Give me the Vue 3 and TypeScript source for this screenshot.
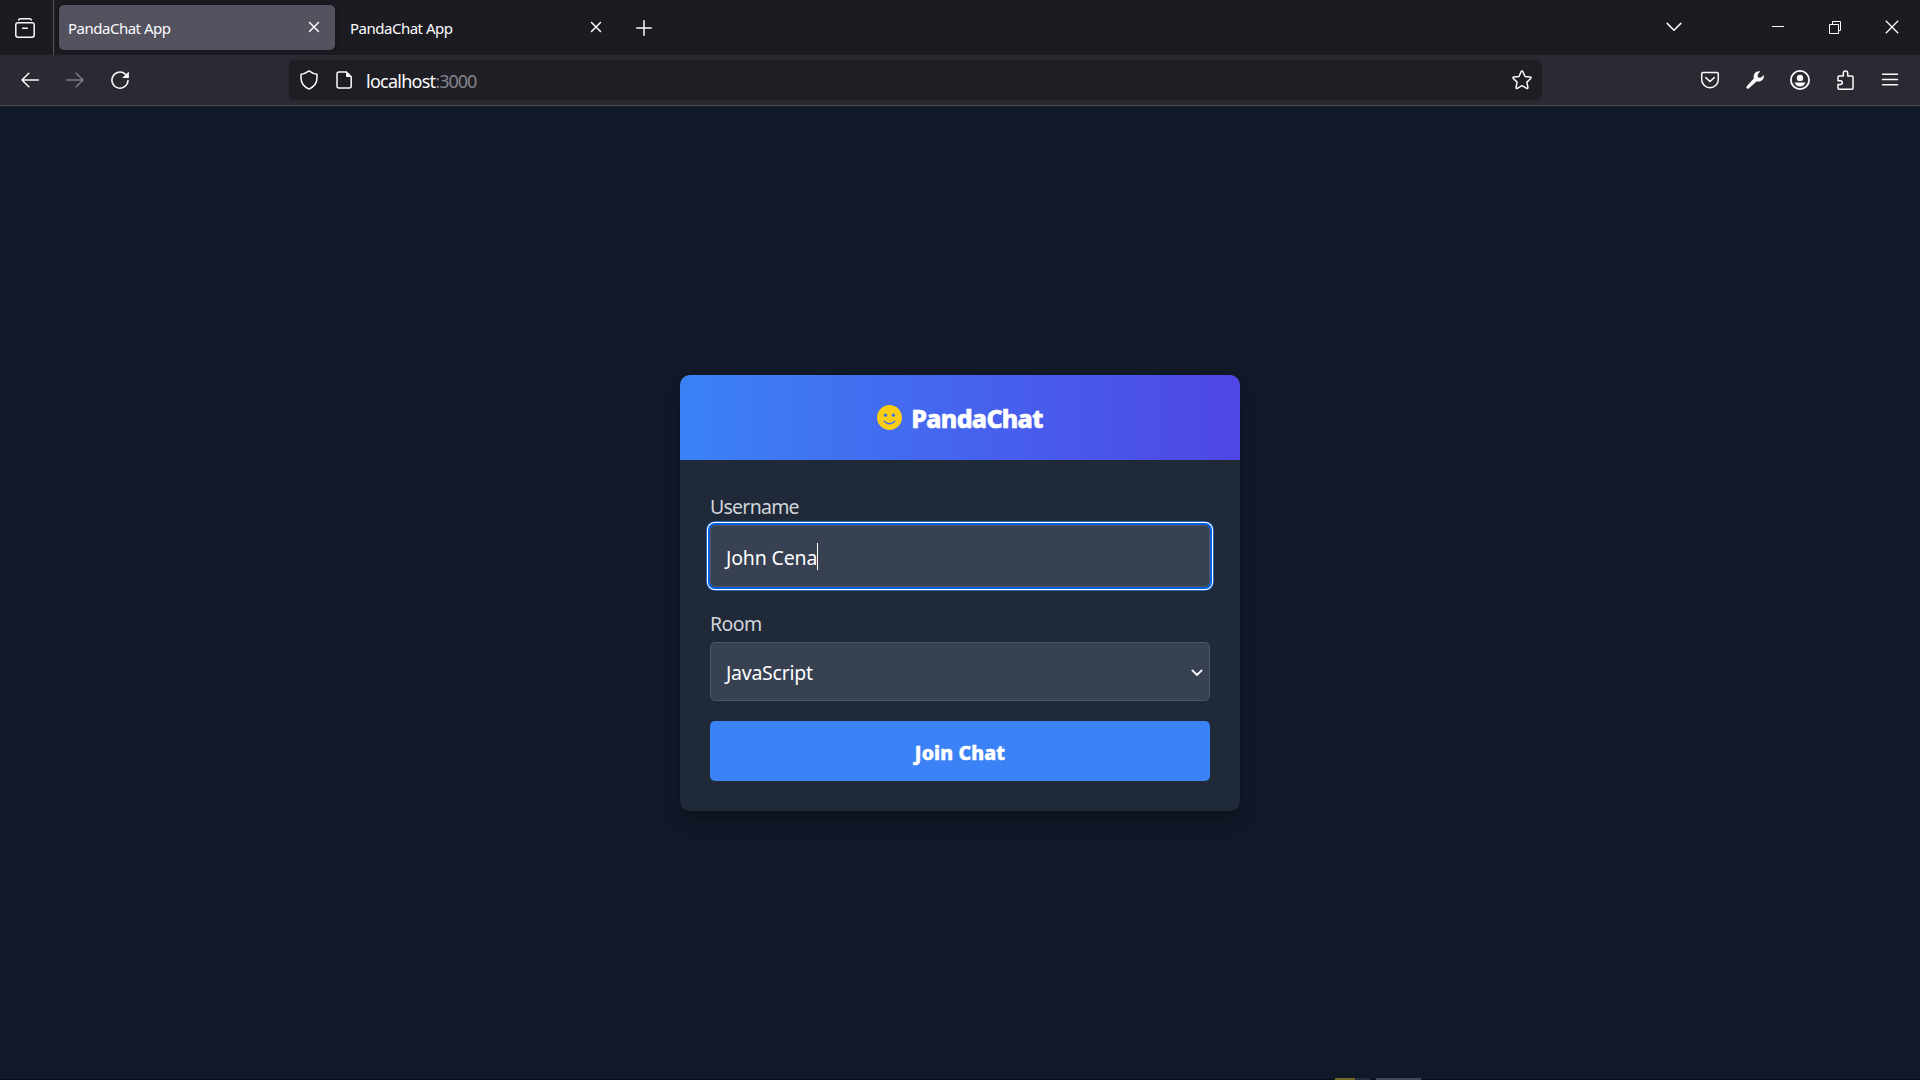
<script setup lang="ts">
import { ref } from 'vue'

interface Tab {
  title: string
  active: boolean
}

const tabs: Tab[] = [
  { title: 'PandaChat App', active: true },
  { title: 'PandaChat App', active: false },
]
const username = ref('John Cena')
const room = ref('JavaScript')
</script>

<template>
  <div class="window">
    <header class="tabbar">
      <div class="view-button">
        <svg class="icon" viewBox="0 0 20 20">
          <path d="M3.6 1.9Q4 .8 5.400 .8h9.200q1.400 0 1.800 1.100" />
          <rect x=".8" y="4.800" width="18.400" height="14.400" rx="2.200" />
          <path d="M7.700 10.200h4.600" />
        </svg>
      </div>
      <div class="tabs">
        <div v-for="(tab, i) in tabs" :key="i" class="tab" :class="{ active: tab.active }">
          <span class="tab-title">{{ tab.title }}</span>
          <svg class="tab-close" viewBox="0 0 12 12"><path d="M1.500 1.500l9 9M10.500 1.500l-9 9" /></svg>
        </div>
        <svg class="plus" viewBox="0 0 16 16"><path d="M8 .8v14.400M.8 8h14.400" /></svg>
      </div>
      <div class="window-controls">
        <svg class="chevron" viewBox="0 0 16 10"><path d="M1.200 1.400L8 8.200l6.800-6.800" /></svg>
        <svg class="win min" viewBox="0 0 14 14"><path d="M1 6.500h12" /></svg>
        <svg class="win restore" viewBox="0 0 14 14"><path d="M1.500 4.500h9v9h-9zM4.500 4.500v-3h8v9h-2" /></svg>
        <svg class="win close" viewBox="0 0 14 14"><path d="M.8 .8l12.400 12.400M13.200 .8L.8 13.200" /></svg>
      </div>
    </header>

    <nav class="toolbar">
      <div class="nav-left">
        <svg class="icon" viewBox="0 0 20 20"><path d="M18.400 10H2M8.800 3.200L2 10l6.800 6.800" /></svg>
        <svg class="icon disabled" viewBox="0 0 20 20"><path d="M1.600 10H18M11.200 3.200L18 10l-6.800 6.800" /></svg>
        <svg class="icon" viewBox="0 0 20 20">
          <path d="M15.300 4.100A8.050 8.050 0 1 0 18 10.500" />
          <path class="solid" d="M18.900 1.400v6.200q0 .5-.5 .5h-6.200z" />
        </svg>
      </div>
      <div class="urlbar">
        <svg class="icon" viewBox="0 0 20 20">
          <path d="M10 .9q4 3 8 3.400v3.500c0 6-3.500 9.300-8 11.300c-4.500-2-8-5.300-8-11.300V4.300Q6 3.900 10 .9z" />
        </svg>
        <svg class="icon page" viewBox="0 0 20 20">
          <path d="M5 1.900h7.200l5 5v9.200q0 2-2 2H5q-2 0-2-2V3.900q0-2 2-2z" />
          <path class="solid" d="M12 1.500l5.500 5.500H13q-1 0-1-1z" />
        </svg>
        <span class="url">localhost<span class="port">:3000</span></span>
        <svg class="icon star" viewBox="0 0 20 20">
          <path d="M10 1.100q.6 0 .9.700l2.100 4.700 5.200.6q1.400.3.500 1.400l-3.800 3.600 1 5.200q.1 1.500-1.200 1L10 15.700l-4.700 2.600q-1.300.5-1.200-1l1-5.200L1.300 8.500Q.4 7.400 1.800 7.100L7 6.500l2.100-4.700q.3-.7.900-.7z" />
        </svg>
      </div>
      <div class="nav-right">
        <svg class="icon" viewBox="0 0 20 20">
          <path d="M3.200 2.600h13.600q1.500 0 1.500 1.500V9.400a8.300 8.300 0 0 1-16.600 0V4.100q0-1.500 1.500-1.500z" />
          <path d="M5.800 7.600L10 11.500l4.200-3.900" />
        </svg>
        <svg class="icon" viewBox="0 0 20 20">
          <path class="solid" d="M15.300 1.300l-2.700 3.400.4 2.700 2.600.4 3.200-2.900c.7 4.500-3 7.400-6.900 6.300l-8.300 7.300c-1.400 1-3-.6-2-2l7.300-8.200C7.800 4 10.900.5 15.300 1.300z" />
        </svg>
        <svg class="icon" viewBox="0 0 20 20">
          <circle class="heavy" cx="10" cy="10" r="9.100" />
          <circle class="solid" cx="10" cy="7.900" r="3.200" />
          <path class="solid" d="M4.600 12.600h10.800q-1.300 3.900-5.400 3.900t-5.400-3.900z" />
        </svg>
        <svg class="icon" viewBox="0 0 20 20">
          <path d="M4.100 19.200q-1.100 0-1.100-1.100v-3.600h2.400a1.900 1.900 0 0 0 0-3.800H3V7.100q0-1.100 1.100-1.100h4.200V3.200a2.200 2.200 0 0 1 4.400 0V6h4.200q1.100 0 1.100 1.100v11q0 1.100-1.100 1.100z" />
        </svg>
        <svg class="icon menu" viewBox="0 0 20 20"><path d="M2.500 4.300h15M2.500 9.500h15M2.500 14.700h15" /></svg>
      </div>
    </nav>

    <main class="page-body">
      <section class="card">
        <div class="card-header">
          <svg class="smile" viewBox="0 0 25 25">
            <circle cx="12.500" cy="12.500" r="12.500" fill="#facc15" />
            <circle cx="8.500" cy="10.200" r="1.600" fill="#4170f2" />
            <circle cx="16.400" cy="10.200" r="1.600" fill="#4170f2" />
            <path d="M7.300 16.200q5.200 5 10.400 0" fill="none" stroke="#4170f2" stroke-width="1.500" stroke-linecap="round" />
          </svg>
          <h1>PandaChat</h1>
        </div>
        <div class="card-content">
          <label>Username</label>
          <div class="field focused">
            <span class="value name">{{ username }}</span><i class="caret"></i>
          </div>
          <label class="room">Room</label>
          <div class="field select">
            <span class="value script">{{ room }}</span>
            <svg class="arrow" viewBox="0 0 12 8"><path d="M1.400 1.400L6 6l4.600-4.600" /></svg>
          </div>
          <button type="button">Join Chat</button>
        </div>
      </section>
      <div class="bottom-edge"><i class="olive"></i><i class="slate"></i><i class="grey"></i></div>
    </main>
  </div>
</template>

<style>
body {
  margin: 0;
  overflow: hidden;
  background: #111827;
}
</style>

<style scoped>
* {
  box-sizing: border-box;
}
.window {
  display: flex;
  flex-direction: column;
  width: 1920px;
  height: 1080px;
  font-family: 'Noto Sans', 'Open Sans', sans-serif;
  color: #fbfbfe;
}
svg {
  flex: none;
  display: block;
  fill: none;
  stroke: #fbfbfe;
  stroke-width: 1.5;
  stroke-linecap: round;
  stroke-linejoin: round;
}
.icon {
  width: 20px;
  height: 20px;
}
.solid {
  fill: #fbfbfe;
  stroke: none;
}
.heavy {
  stroke-width: 1.8;
}
.disabled {
  opacity: 0.4;
}
.tabbar {
  display: flex;
  height: 55px;
  background: #1c1b22;
}
.view-button {
  width: 54px;
  padding: 18px 0 0 15px;
  border-right: 1px solid #55545e;
}
.tabs {
  display: flex;
  padding: 5px 0 0 5px;
}
.tab {
  display: flex;
  align-items: center;
  justify-content: space-between;
  width: 276px;
  height: 45px;
  margin-right: 6px;
  padding: 0 15px 2px 9px;
  border-radius: 5px;
}
.tab.active {
  background: #54525e;
  box-shadow: 0 0 4px rgba(0, 0, 0, 0.4);
}
.tab-title {
  font-size: 15px;
  line-height: 20px;
  letter-spacing: -0.5px;
  padding-top: 3px;
}
.tab-close {
  width: 12px;
  height: 12px;
}
.plus {
  width: 16px;
  height: 16px;
  margin: 15px 0 0 13px;
}
.window-controls {
  display: flex;
  align-items: flex-start;
  margin-left: auto;
  padding: 20px 21px 0 0;
}
.chevron {
  width: 16px;
  height: 10px;
  margin: 2px 89px 0 0;
}
.win {
  width: 14px;
  height: 14px;
  stroke-width: 1;
  stroke-linecap: butt;
  stroke-linejoin: miter;
}
.win.close {
  stroke-width: 1.3;
}
.restore {
  margin: 0 43px;
}
.toolbar {
  display: flex;
  height: 51px;
  background: #2b2a33;
  border-bottom: 1px solid #4f4e59;
  padding-top: 5px;
}
.nav-left {
  display: flex;
  gap: 25px;
  width: 289px;
  padding: 10px 0 0 20px;
}
.urlbar {
  display: flex;
  align-items: center;
  width: 1253px;
  height: 40px;
  padding: 0 10px;
  border-radius: 5px;
  background: #1f1e25;
}
.page {
  margin-left: 15px;
}
.url {
  margin-left: 12px;
  padding-top: 2px;
  font-size: 18px;
  line-height: 24px;
  letter-spacing: -0.75px;
}
.port {
  letter-spacing: -1px;
  color: #85848c;
}
.star {
  margin-left: auto;
}
.nav-right {
  display: flex;
  gap: 25px;
  margin-left: auto;
  padding: 10px 20px 0 0;
}
.page-body {
  position: relative;
  flex: 1;
  padding-top: 269px;
  background: #111827;
}
.card {
  width: 560px;
  height: 436px;
  margin: 0 auto;
  overflow: hidden;
  border-radius: 10px;
  background: #1f2937;
  box-shadow: 0 12px 19px -4px rgba(0, 0, 0, 0.18), 0 5px 8px -5px rgba(0, 0, 0, 0.18);
}
.card-header {
  display: flex;
  align-items: center;
  justify-content: center;
  height: 85px;
  background: linear-gradient(to right, #3b82f6, #4f46e5);
}
.smile {
  width: 25px;
  height: 25px;
  stroke: none;
}
h1 {
  margin: 0 0 0 9px;
  padding-top: 2px;
  font-size: 25px;
  line-height: 35px;
  font-weight: 800;
  letter-spacing: -0.7px;
  -webkit-text-stroke: 0.6px #fff;
  color: #fff;
}
.card-content {
  display: flex;
  flex-direction: column;
  padding: 32px 30px 30px;
}
label {
  height: 33px;
  font-size: 19.500px;
  line-height: 30px;
  letter-spacing: -0.75px;
  color: #d1d5db;
}
.room {
  margin-top: 22px;
  letter-spacing: -0.6px;
}
.field {
  display: flex;
  align-items: center;
  height: 62px;
  padding: 0 15px;
  border: 1px solid #4b5563;
  border-radius: 5px;
  background: #374151;
  color: #fff;
}
.focused {
  border-color: #4f5663;
  box-shadow: 0 0 0 2px #0060df, 0 0 0 3px #fff, 0 0 0 4px rgba(38, 112, 215, 0.85);
}
.value {
  font-size: 19.500px;
  line-height: 28px;
  letter-spacing: -0.25px;
  padding-top: 2px;
}
.name {
  letter-spacing: -0.15px;
  padding-top: 4px;
}
.caret {
  width: 1px;
  height: 27px;
  background: #fff;
}
.select {
  height: 59px;
  justify-content: space-between;
  padding-right: 6px;
}
.arrow {
  width: 12px;
  height: 8px;
  margin-top: 3px;
  stroke-width: 1.9;
}
button {
  height: 60px;
  margin-top: 20px;
  padding: 4px 0 0;
  border: 0;
  border-radius: 5px;
  background: #3b82f6;
  color: #fff;
  font: 800 19.500px/28px 'Noto Sans', 'Open Sans', sans-serif;
  letter-spacing: 0.15px;
  -webkit-text-stroke: 0.5px #fff;
}
.bottom-edge {
  position: absolute;
  left: 0;
  right: 0;
  bottom: 0;
  display: flex;
  align-items: flex-end;
  height: 2px;
  padding-left: 1335px;
  border-bottom: 1px solid #0b0e17;
}
.bottom-edge i {
  height: 2px;
  margin-bottom: -1px;
}
.olive {
  width: 20px;
  background: #6e6a2c;
}
.slate {
  width: 15px;
  background: #262e40;
}
.grey {
  width: 45px;
  margin-left: 6px;
  background: #454755;
}
</style>
